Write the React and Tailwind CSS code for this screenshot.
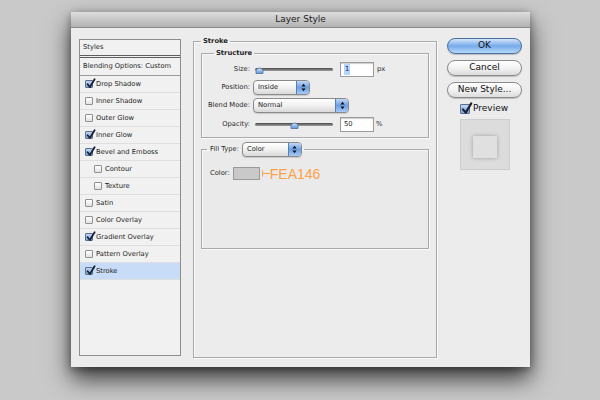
import React from 'react';

const ui = "font-['DejaVu_Sans',sans-serif]";

const styleRows = [
  { label: 'Drop Shadow', checked: true },
  { label: 'Inner Shadow' },
  { label: 'Outer Glow' },
  { label: 'Inner Glow', checked: true },
  { label: 'Bevel and Emboss', checked: true },
  { label: 'Contour', sub: true },
  { label: 'Texture', sub: true },
  { label: 'Satin' },
  { label: 'Color Overlay' },
  { label: 'Gradient Overlay', checked: true },
  { label: 'Pattern Overlay' },
  { label: 'Stroke', checked: true, active: true },
];

function Check({ checked, big }) {
  const size = big ? 'w-[10px] h-[10px]' : 'w-[8px] h-[8px]';
  return (
    <span
      className={`relative inline-block shrink-0 rounded-[1px] border ${size} ${
        checked
          ? 'border-[#5b6f8b] bg-linear-to-b from-[#c3d6f1] to-[#7ea5da]'
          : 'border-[#909090] bg-linear-to-b from-[#ffffff] to-[#e2e2e2]'
      }`}
    >
      {checked && (
        <svg
          className="absolute -top-[3px] left-0"
          width={big ? 12 : 10}
          height={big ? 13 : 11}
          viewBox="0 0 10 11"
        >
          <path
            d="M1.6 6.2 L3.9 9 L8.6 1.2"
            fill="none"
            stroke="#15223a"
            strokeWidth="1.8"
            strokeLinecap="round"
            strokeLinejoin="round"
          />
        </svg>
      )}
    </span>
  );
}

function Popup({ value, width }) {
  return (
    <div
      className={`flex h-[15px] ${width} overflow-hidden rounded-[4px] border border-[#8b8b8b] bg-linear-to-b from-[#ffffff] via-[#f1f1f1] to-[#d9d9d9] shadow-[0_1px_1px_rgba(0,0,0,0.15)]`}
    >
      <span className="flex-1 pl-[4px] text-[6.75px] leading-[13px] text-[#1c1c1c]">{value}</span>
      <span className="flex w-[13px] items-center justify-center border-l border-[#5b7fb3] bg-linear-to-b from-[#c0d8f6] via-[#6c9fe4] to-[#a6cbf5]">
        <svg width="5" height="9" viewBox="0 0 5 9">
          <path d="M2.5 0.8 L4.6 3.6 H0.4Z M2.5 8.2 L4.6 5.4 H0.4Z" fill="#111" />
        </svg>
      </span>
    </div>
  );
}

function Slider({ value }) {
  return (
    <div className="relative flex h-[10px] w-[78px] items-center">
      <div className="h-[3px] w-full rounded-full bg-linear-to-b from-[#4a4a4a] to-[#a0a0a0]" />
      <svg
        className="absolute top-[1px]"
        style={{ left: `${(value / 100) * 70}px` }}
        width="9"
        height="8"
        viewBox="0 0 9 8"
      >
        <defs>
          <linearGradient id="thumb" x1="0" y1="0" x2="0" y2="1">
            <stop offset="0" stopColor="#d4e6fb" />
            <stop offset="1" stopColor="#5d95dc" />
          </linearGradient>
        </defs>
        <path d="M1 7.5 V4 Q4.5 0 8 4 V7.5 Z" fill="url(#thumb)" stroke="#4f6f9c" strokeWidth="0.8" />
      </svg>
    </div>
  );
}

function NumBox({ children }) {
  return (
    <div className="ml-[7px] flex h-[15px] w-[34px] items-center border border-[#9c9c9c] bg-white pl-[3px] text-[6.75px] text-[#1c1c1c] shadow-[inset_0_1px_1px_rgba(0,0,0,0.2)]">
      {children}
    </div>
  );
}

function Label({ children }) {
  return <span className="w-[48px] shrink-0 text-right text-[6.75px] text-[#2a2a2a]">{children}</span>;
}

function AquaButton({ children, primary }) {
  return (
    <div
      className={`flex h-[16px] w-[75px] items-center justify-center rounded-full border text-[9px] text-[#111] shadow-[0_1px_1px_rgba(0,0,0,0.2)] ${
        primary
          ? 'border-[#4a6f9f] bg-linear-to-b from-[#d3e4f8] via-[#76aaeb] to-[#b7d8f8]'
          : 'border-[#8a8a8a] bg-linear-to-b from-[#ffffff] via-[#f2f2f2] to-[#dcdcdc]'
      }`}
    >
      {children}
    </div>
  );
}

export default function App() {
  return (
    <div className={`h-[400px] w-[600px] overflow-hidden bg-[#c9c9c9] pl-[71px] pt-[12px] ${ui}`}>
      <div className="flex h-[355px] w-[459px] flex-col bg-[#ececec] shadow-[0_12px_22px_rgba(0,0,0,0.7),0_2px_8px_rgba(0,0,0,0.35)]">
        {/* title bar */}
        <div className="flex h-[16px] items-center justify-center border-b border-[#8a8a8a] bg-linear-to-b from-[#dedede] to-[#b2b2b2] text-[9px] leading-none text-[#1e1e1e]">
          Layer Style
        </div>

        <div className="flex pl-[8px] pt-[8px]">
          {/* styles list */}
          <div className="mt-[3px] h-[317px] w-[102px] border border-[#8e8e8e] bg-[#f1f1f1] text-[6.75px] text-[#1e1e1e]">
            <div className="flex h-[18px] items-center border-b-[3px] border-double border-[#5e5e5e] pl-[3px]">
              Styles
            </div>
            <div className="flex h-[18px] items-center border-b border-[#9a9a9a] pl-[3px]">
              Blending Options: Custom
            </div>
            {styleRows.map((r) => (
              <div
                key={r.label}
                className={`flex h-[17px] items-center gap-[2px] border-b border-[#dedede] ${
                  r.sub ? 'pl-[14px]' : 'pl-[5px]'
                } ${r.active ? 'bg-[#c9dcf7]' : ''}`}
              >
                <Check checked={r.checked} />
                <span className="pl-[1px]">{r.label}</span>
              </div>
            ))}
          </div>

          {/* center */}
          <fieldset className="ml-[12px] h-[322px] w-[244px] border border-[#a9a9a9] px-[7px] shadow-[inset_1px_1px_0_#fafafa,1px_1px_0_#fafafa]">
            <legend className="px-[2px] text-[6.75px] font-bold leading-[10px] text-[#1e1e1e]">Stroke</legend>

            <fieldset className="mt-[2px] h-[90px] border border-[#a9a9a9] shadow-[inset_1px_1px_0_#fafafa,1px_1px_0_#fafafa]">
              <legend className="ml-[12px] px-[2px] text-[6.75px] font-bold leading-[10px] text-[#1e1e1e]">
                Structure
              </legend>
              <div className="flex flex-col pt-[3px]">
                <div className="flex h-[17px] items-center">
                  <Label>Size:</Label>
                  <span className="ml-[5px]">
                    <Slider value={0} />
                  </span>
                  <NumBox>
                    <span className="bg-[#b5d4fe] px-[1px]">1</span>
                  </NumBox>
                  <span className="ml-[3px] text-[6.75px] text-[#2a2a2a]">px</span>
                </div>
                <div className="flex h-[18px] items-center">
                  <Label>Position:</Label>
                  <span className="ml-[3px]">
                    <Popup value="Inside" width="w-[57px]" />
                  </span>
                </div>
                <div className="flex h-[19px] items-center">
                  <Label>Blend Mode:</Label>
                  <span className="ml-[3px]">
                    <Popup value="Normal" width="w-[96px]" />
                  </span>
                </div>
                <div className="flex h-[19px] items-center">
                  <Label>Opacity:</Label>
                  <span className="ml-[5px]">
                    <Slider value={50} />
                  </span>
                  <NumBox>50</NumBox>
                  <span className="ml-[2px] text-[6.75px] text-[#2a2a2a]">%</span>
                </div>
              </div>
            </fieldset>

            <fieldset className="mt-[4px] h-[107px] border border-[#a9a9a9] bg-[#eaeaea] shadow-[inset_1px_1px_0_#fafafa,1px_1px_0_#fafafa]">
              <legend className="ml-[5px] pl-[3px] pr-[2px]">
                <div className="flex items-center gap-[3px]">
                  <span className="text-[6.75px] text-[#2a2a2a]">Fill Type:</span>
                  <Popup value="Color" width="w-[60px]" />
                </div>
              </legend>
              <div className="mt-[10px] flex h-[13px] items-center pl-[8px]">
                <span className="text-[6.75px] text-[#2a2a2a]">Color:</span>
                <span className="ml-[3px] h-[13px] w-[27px] border border-[#9a9a9a] bg-[#c9c9c9]" />
                <svg className="ml-[2px]" width="8" height="9" viewBox="0 0 8 9">
                  <path d="M0.5 1.5 V7.5 M0.5 4.5 H8" stroke="#fea146" strokeWidth="1" fill="none" />
                </svg>
                <span className="font-['Liberation_Sans',sans-serif] text-[14px] leading-none text-[#fea146]">
                  FEA146
                </span>
              </div>
            </fieldset>
          </fieldset>

          {/* right column */}
          <div className="ml-[10px] flex w-[75px] flex-col">
            <div className="mt-[2px]">
              <AquaButton primary>OK</AquaButton>
            </div>
            <div className="mt-[6px]">
              <AquaButton>Cancel</AquaButton>
            </div>
            <div className="mt-[6px]">
              <AquaButton>New Style...</AquaButton>
            </div>
            <div className="ml-[13px] mt-[5px] flex h-[12px] items-center gap-[3px] text-[9px] text-[#111]">
              <Check checked big />
              <span>Preview</span>
            </div>
            <div className="ml-[13px] mt-[4px] flex h-[51px] w-[50px] justify-center border border-[#cdcdcd] bg-[#dcdcdc] pt-[16px]">
              <div className="h-[22px] w-[24px] rounded-[1px] bg-[#e0e0e0] shadow-[0_0_4px_rgba(0,0,0,0.28)]" />
            </div>
          </div>
        </div>
      </div>
    </div>
  );
}
